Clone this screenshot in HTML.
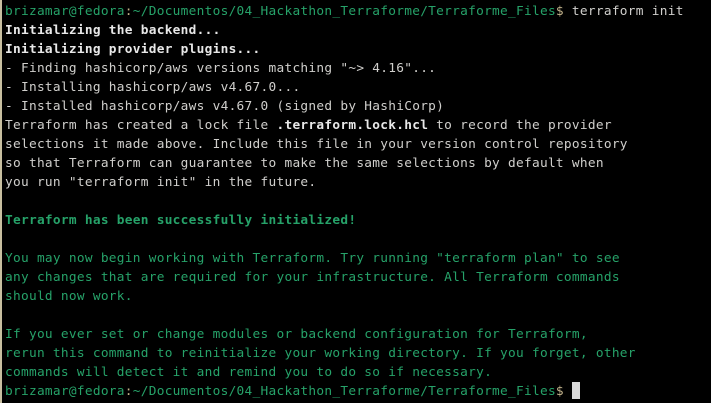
<!DOCTYPE html>
<html><head><style>
html,body{margin:0;padding:0;background:#000;width:711px;height:403px;overflow:hidden}
body{border-left:2px solid #c8bfa0;box-sizing:border-box}
pre{margin:0;padding:2px 0 0 3px;font-family:"DejaVu Sans Mono","Liberation Mono",monospace;font-size:12.8px;letter-spacing:0.28px;line-height:19px;color:#d0cfcc}
.g{color:#26a269}.b{font-weight:bold;color:#e8e8e8}.gb{font-weight:bold;color:#26a269}.d{color:#c4b48c}
.c{display:inline-block;width:8px;height:17px;background:#d8d8d8;vertical-align:-4px}
</style></head><body><pre><span class="g">brizamar@fedora</span><span class="d">:</span><span class="g">~/Documentos/04_Hackathon_Terraforme/Terraforme_Files</span><span class="d">$</span> terraform init
<span class="b">Initializing the backend...</span>
<span class="b">Initializing provider plugins...</span>
- Finding hashicorp/aws versions matching "~&gt; 4.16"...
- Installing hashicorp/aws v4.67.0...
- Installed hashicorp/aws v4.67.0 (signed by HashiCorp)
Terraform has created a lock file <span class="b">.terraform.lock.hcl</span> to record the provider
selections it made above. Include this file in your version control repository
so that Terraform can guarantee to make the same selections by default when
you run "terraform init" in the future.

<span class="gb">Terraform has been successfully initialized!</span>
<span class="g">
You may now begin working with Terraform. Try running "terraform plan" to see
any changes that are required for your infrastructure. All Terraform commands
should now work.

If you ever set or change modules or backend configuration for Terraform,
rerun this command to reinitialize your working directory. If you forget, other
commands will detect it and remind you to do so if necessary.</span>
<span class="g">brizamar@fedora</span><span class="d">:</span><span class="g">~/Documentos/04_Hackathon_Terraforme/Terraforme_Files</span><span class="d">$</span> <span class="c"></span></pre></body></html>
